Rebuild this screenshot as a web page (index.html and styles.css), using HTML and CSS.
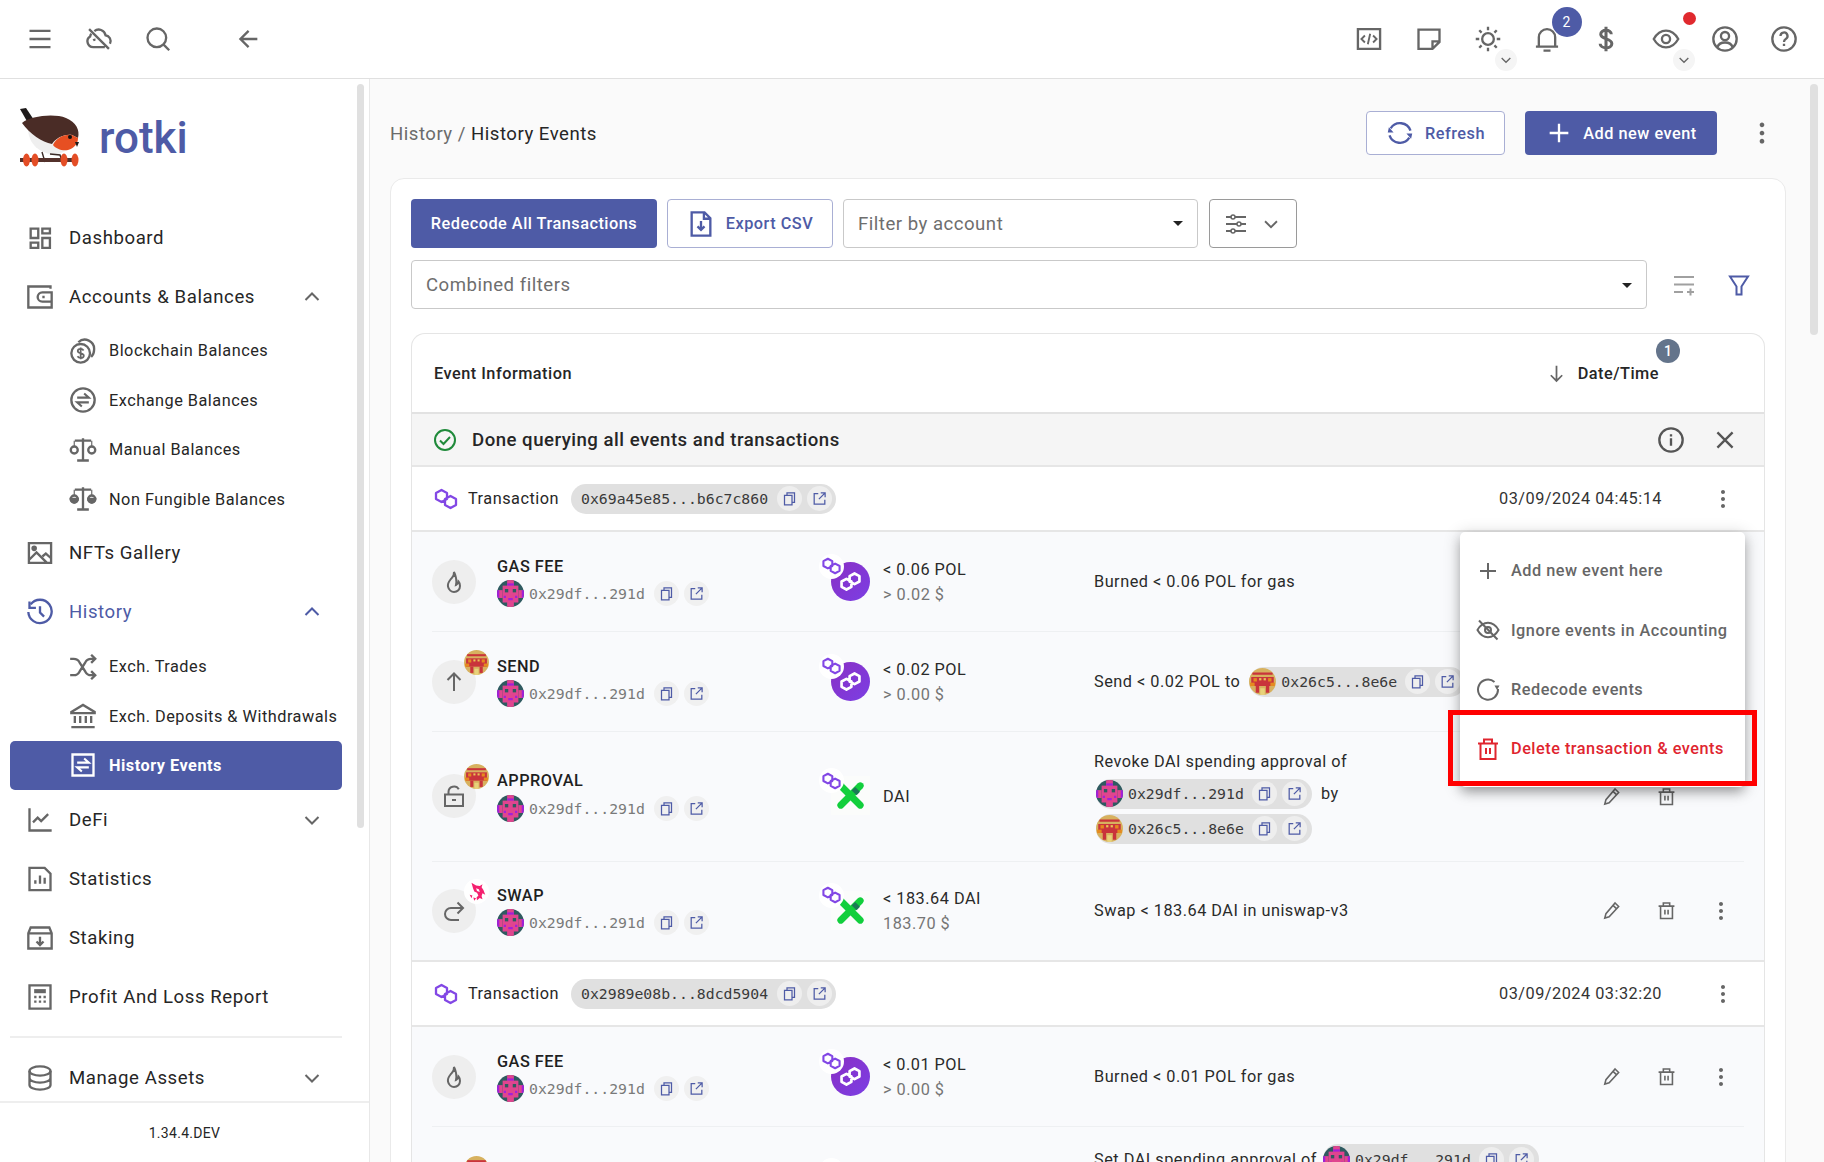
FILE: index.html
```html
<!DOCTYPE html>
<html lang="en">
<head>
<meta charset="utf-8">
<title>rotki</title>
<link rel="stylesheet" href="styles.css">
</head>
<body>
<svg class="sprite" aria-hidden="true">
<defs>
<linearGradient id="polyg" x1="0" y1="0" x2="1" y2="1"><stop offset="0" stop-color="#8a2fc4"/><stop offset="1" stop-color="#7b3fe4"/></linearGradient>
<clipPath id="circ"><circle cx="12" cy="12" r="12"/></clipPath>
<symbol id="menu" viewBox="0 0 24 24"><path d="M3 5h18M3 12h18M3 19h18"/></symbol>
<symbol id="cloudoff" viewBox="0 0 24 24"><path d="M3.5 3.5l17 17M8 5.2a6 6 0 0 1 9.6 3.6 5 5 0 0 1 3.8 7.2M17 19H7a5 5 0 0 1-2.6-9.2 6 6 0 0 1 1-2.3"/><path d="M9 12.5a4 4 0 0 0-2 .5"/></symbol>
<symbol id="search" viewBox="0 0 24 24"><circle cx="11" cy="11" r="8"/><path d="M16.8 16.8l4.8 4.8"/></symbol>
<symbol id="back" viewBox="0 0 24 24"><path d="M20 12H6M12.5 5l-7 7 7 7"/></symbol>
<symbol id="codebox" viewBox="0 0 24 24"><path d="M2.500 3.500h19v17h-19z"/><path d="M8.500 9l-3 3 3 3M15.500 9l3 3-3 3M13 7.500l-2 9" stroke-width="1.600"/></symbol>
<symbol id="note" viewBox="0 0 24 24"><path d="M21 4v10.500L15 20.500H3V4zM21 14h-6v6.500"/></symbol>
<symbol id="sun" viewBox="0 0 24 24"><circle cx="12" cy="12" r="5"/><path d="M12 1.500v3M12 19.500v3M1.500 12h3M19.500 12h3M4.500 4.500l2 2M17.500 17.500l2 2M4.500 19.500l2-2M17.500 6.500l2-2"/></symbol>
<symbol id="bell" viewBox="0 0 24 24"><path d="M2.500 18.500h19M5 18.500v-8a7 7 0 0 1 14 0v8M9 22h6"/></symbol>
<symbol id="dollar" viewBox="0 0 24 24"><path d="M16.500 8c0-2-1.900-3.500-4.500-3.500S7.500 5.900 7.500 8c0 4.800 9.500 2.900 9.500 8 0 2.200-2.200 3.500-5 3.500s-5-1.500-5-3.500M12 1.500v21" stroke-width="2.600"/></symbol>
<symbol id="eye" viewBox="0 0 24 24"><path d="M1.500 12C4 7.500 7.500 4.800 12 4.800s8 2.700 10.500 7.200c-2.500 4.500-6 7.200-10.500 7.200S4 16.500 1.500 12z"/><circle cx="12" cy="12" r="3.500"/></symbol>
<symbol id="eyeoff" viewBox="0 0 24 24"><path d="M1.500 12C4 7.500 7.500 4.800 12 4.800s8 2.700 10.500 7.200c-2.500 4.500-6 7.200-10.500 7.200S4 16.500 1.500 12z"/><circle cx="12" cy="12" r="3"/><path d="M3 2.500l18.500 19"/></symbol>
<symbol id="user" viewBox="0 0 24 24"><circle cx="12" cy="12" r="10"/><circle cx="12" cy="9.500" r="3.500"/><path d="M5.500 19c1-3 3.500-4 6.500-4s5.500 1 6.500 4"/></symbol>
<symbol id="help" viewBox="0 0 24 24"><circle cx="12" cy="12" r="10"/><path d="M9 9.500A3 3 0 1 1 13.500 12c-1 .6-1.500 1-1.500 2.500M12 16v2"/></symbol>
<symbol id="dash" viewBox="0 0 24 24"><path d="M4 4h6.500v8H4zM14 4h6.500v4H14zM4 16h6.500v4.500H4zM14 12h6.500v8.500H14z"/></symbol>
<symbol id="wallet" viewBox="0 0 24 24"><path d="M21 5V3H2v18h20V8H14a4 4 0 0 0 0 8h8M14 12h2"/></symbol>
<symbol id="coins" viewBox="0 0 24 24"><circle cx="10" cy="14" r="8"/><path d="M8 4.500A8 8 0 0 1 21.500 11a8 8 0 0 1-2.500 6"/><path d="M12.500 11.500c-.5-.8-1.400-1.300-2.500-1.300-1.500 0-2.500.8-2.500 1.900 0 2.600 5.200 1.300 5.200 3.900 0 1.100-1.200 1.900-2.700 1.900-1.200 0-2.200-.5-2.700-1.400M10 9v10" stroke-width="1.500"/></symbol>
<symbol id="excirc" viewBox="0 0 24 24"><circle cx="12" cy="12" r="10"/><path d="M7 10h10l-4-3.500M17 14H7l4 3.500" stroke-width="1.800"/></symbol>
<symbol id="scale" viewBox="0 0 24 24"><path d="M12 2v19M5 4h14M7 21h10"/><circle cx="4.500" cy="12" r="3"/><circle cx="19.500" cy="12" r="3"/><path d="M4.500 4v5M19.500 4v5" stroke-width="1"/></symbol>
<symbol id="scalef" viewBox="0 0 24 24"><path d="M12 2v19M5 4h14M7 21h10"/><circle cx="4.500" cy="12" r="3"/><circle cx="19.500" cy="12" r="3"/><path d="M4.500 4v5M19.500 4v5" stroke-width="1"/><path d="M1.500 12h6a3 3 0 0 1-6 0zM16.500 12h6a3 3 0 0 1-6 0z" fill="currentColor"/></symbol>
<symbol id="image" viewBox="0 0 24 24"><path d="M2.500 3.500h19v17h-19zM2.500 18L9 11.500l9 9"/><path d="M14 15l3-2.500 4.500 4"/><circle cx="7" cy="8" r="1.400" fill="currentColor"/></symbol>
<symbol id="history" viewBox="0 0 24 24"><path d="M4 5.500A10 10 0 1 1 2 12"/><path d="M3 3v5.500h5.500" stroke-width="2"/><path d="M12 7v5.500l3.500 3.500"/></symbol>
<symbol id="shuffle" viewBox="0 0 24 24"><path d="M1 5h3c2 0 4 1 5 3l5 8c1 2 3 3 5 3h3M1 19h3c2 0 4-1 5-3l5-8c1-2 3-3 5-3h3"/><path d="M19 1.500l3.500 3.500L19 8.500M19 15.500l3.500 3.500-3.500 3.500"/></symbol>
<symbol id="bank" viewBox="0 0 24 24"><path d="M2 8.500L12 2.500l10 6v1H2zM5 12v6M9.600 12v6M14.400 12v6M19 12v6M2 21.500h20"/></symbol>
<symbol id="exbox" viewBox="0 0 24 24"><path d="M3 3h18v18H3z"/><path d="M7 10h10l-4-3.500M17 14H7l4 3.500" stroke-width="1.800"/></symbol>
<symbol id="chart" viewBox="0 0 24 24"><path d="M3 2v19h19M6 14l4-4 3 3 6-6"/></symbol>
<symbol id="filechart" viewBox="0 0 24 24"><path d="M3 2.500h13l5 5v14H3zM8 16v-3M12 16V9M16 16v-5"/></symbol>
<symbol id="archive" viewBox="0 0 24 24"><path d="M4 3h16l2 5v13H2V8zM2 8h20M12 11v6.500M9 15l3 3 3-3"/></symbol>
<symbol id="calc" viewBox="0 0 24 24"><path d="M3 2h18v20H3z"/><path d="M7 7h10" stroke-width="3.500"/><path d="M7 12h2M11 12h2M15 12h2M7 16h2M11 16h2M15 16h2" stroke-width="2"/></symbol>
<symbol id="db" viewBox="0 0 24 24"><ellipse cx="12" cy="6" rx="9" ry="4"/><path d="M3 6v12c0 2.200 4 4 9 4s9-1.800 9-4V6M3 12c0 2.200 4 4 9 4s9-1.800 9-4"/></symbol>
<symbol id="chev-d" viewBox="0 0 24 24"><path d="M5.500 9l6.500 6.500L18.500 9"/></symbol>
<symbol id="chev-u" viewBox="0 0 24 24"><path d="M5.500 15L12 8.500 18.500 15"/></symbol>
<symbol id="refresh" viewBox="0 0 24 24"><path d="M4 8A9.500 9.500 0 0 1 21 10M20 16A9.500 9.500 0 0 1 3 14"/><path d="M1.500 11.500h5L2.500 7zM22.500 12.500h-5l4 4.500z" fill="currentColor" stroke="none"/></symbol>
<symbol id="plus" viewBox="0 0 24 24"><path d="M12 4v16M4 12h16"/></symbol>
<symbol id="more" viewBox="0 0 24 24"><path d="M12 3c-1.100 0-2 .9-2 2s.9 2 2 2 2-.9 2-2-.9-2-2-2zm0 14c-1.100 0-2 .9-2 2s.9 2 2 2 2-.9 2-2-.9-2-2-2zm0-7c-1.100 0-2 .9-2 2s.9 2 2 2 2-.9 2-2-.9-2-2-2z" fill="currentColor" stroke="none"/></symbol>
<symbol id="filedown" viewBox="0 0 24 24"><path d="M4 2h11l5 5v15H4zM14.500 2v5.500H20M12 9.500v7M9 14l3 3 3-3"/></symbol>
<symbol id="sliders" viewBox="0 0 24 24"><path d="M2 5h5.500M11 5h11M2 12h11M16.500 12H22M2 19h5.500M11 19h11" stroke-width="1.800"/><circle cx="9" cy="5" r="2" stroke-width="1.500"/><circle cx="15" cy="12" r="2" stroke-width="1.500"/><circle cx="9" cy="19" r="2" stroke-width="1.500"/></symbol>
<symbol id="listplus" viewBox="0 0 24 24"><path d="M2 4h20M2 11.500h20M2 19h9M15 19h7M18.500 15.500v7"/></symbol>
<symbol id="filter" viewBox="0 0 24 24"><path d="M3 3.500h18l-6.500 10v8h-5v-8z"/></symbol>
<symbol id="arrdown" viewBox="0 0 24 24"><path d="M12 3v17M5.500 14l6.500 6.500 6.500-6.500"/></symbol>
<symbol id="arrup" viewBox="0 0 24 24"><path d="M12 21V4M5.500 10L12 3.500 18.500 10"/></symbol>
<symbol id="check" viewBox="0 0 24 24"><circle cx="12" cy="12" r="10"/><path d="M7 12.500l3.500 3.500 6.500-7"/></symbol>
<symbol id="info" viewBox="0 0 24 24"><circle cx="12" cy="12" r="10"/><path d="M12 10.500V17M12 7v2"/></symbol>
<symbol id="close" viewBox="0 0 24 24"><path d="M5.500 5.500l13 13M18.500 5.500l-13 13"/></symbol>
<symbol id="copy" viewBox="0 0 24 24"><path d="M8 7V3h12v15h-4"/><path d="M4 7h12v15H4z"/></symbol>
<symbol id="ext" viewBox="0 0 24 24"><path d="M10 4H3.500v17h17v-7M14 3h7v7M21 3L11 13"/></symbol>
<symbol id="flame" viewBox="0 0 24 24"><path d="M12 2c.5 4-1.500 5-3.500 7.500C6.500 12 5.500 14 6 16.500 6.700 20 9.500 22 12 22c3.500 0 6-2.700 6-6 0-1.800-.6-3.500-1.500-4.500-.2 1.800-1 3-2.500 3.500 1-4-.2-10-2-13z"/></symbol>
<symbol id="unlock" viewBox="0 0 24 24"><path d="M3 10.500h18V22H3zM6.500 10.500V8a5.500 5.500 0 0 1 10.300-2.700M10 16h4"/></symbol>
<symbol id="redo" viewBox="0 0 24 24"><path d="M21 9H9a6 6 0 0 0 0 12h8M15.500 3.500L21 9l-5.500 5.500"/></symbol>
<symbol id="pencil" viewBox="0 0 24 24"><path d="M16.500 2.500l4.500 4.500L9 20l-5.500 1.500L5 16zM14 5.500l4.500 4.500"/></symbol>
<symbol id="trash" viewBox="0 0 24 24"><path d="M2 6.500h20M4.500 6.500V22h15V6.500M8 6.500V2.500h8v4M10 11v6M14 11v6"/></symbol>
<symbol id="redecode" viewBox="0 0 24 24"><path d="M18.500 5A10 10 0 1 0 22 12"/><path d="M18.500 8.500h5l-2.500 4.500z" fill="currentColor" stroke="none"/></symbol>
<symbol id="poly" viewBox="0 0 26 24"><path d="M8.500 3L14 6v6l-5.500 3L3 12V6zM17.500 9L23 12v6l-5.500 3L12 18v-6z" stroke-linejoin="round"/></symbol>
<symbol id="ava1" viewBox="0 0 24 24"><g clip-path="url(#circ)"><rect width="24" height="24" fill="#2f5a60"/><rect x="5" y="5" width="14" height="15" fill="#e0458f"/><rect x="9" y="0" width="6" height="24" fill="#e0458f"/><rect x="1" y="9" width="4" height="7" fill="#e0458f"/><rect x="19" y="9" width="4" height="7" fill="#e0458f"/><rect x="9" y="3" width="6" height="2" fill="#a41fd8"/><rect x="0" y="9" width="2" height="7" fill="#a41fd8"/><rect x="22" y="9" width="2" height="7" fill="#a41fd8"/><rect x="7" y="8" width="3" height="3" fill="#2f5a60"/><rect x="14" y="8" width="3" height="3" fill="#2f5a60"/><rect x="6" y="14" width="2" height="2" fill="#a41fd8"/><rect x="16" y="14" width="2" height="2" fill="#a41fd8"/><rect x="10" y="16" width="4" height="2" fill="#a41fd8"/></g></symbol>
<symbol id="ava2" viewBox="0 0 24 24"><g clip-path="url(#circ)"><rect width="24" height="24" fill="#d7b15f"/><rect x="3" y="4" width="18" height="2" fill="#c9343b"/><rect x="2" y="8" width="20" height="8" fill="#c9343b"/><rect x="4" y="9" width="3" height="3" fill="#e58a1f"/><rect x="17" y="9" width="3" height="3" fill="#e58a1f"/><rect x="9" y="9" width="2" height="2" fill="#e8c455"/><rect x="13" y="9" width="2" height="2" fill="#e8c455"/><rect x="1" y="13" width="4" height="3" fill="#e58a1f"/><rect x="19" y="13" width="4" height="3" fill="#e58a1f"/><rect x="6" y="16" width="3" height="6" fill="#c9343b"/><rect x="15" y="16" width="3" height="6" fill="#c9343b"/><rect x="10" y="18" width="4" height="6" fill="#e8d27a"/></g></symbol>
<symbol id="uni" viewBox="0 0 24 24"><path d="M6 3l5 3 4 .5 3-2-1 3.500 2 3 2 5-3-1.500-1 3 1 3.500-3-1.500-3 2.500-.5-3 2-2-1.500-3-3-1.500-1.500-4zM4 16l3 1-1 3zM8 19l3 1-2 2.500z" fill="#f5206f" stroke="none"/><path d="M11 9l3 1 1 3-3-1z" fill="#fff" stroke="none"/></symbol>
</defs>
</svg>

<div class="app">
  <header class="topbar">
    <button class="tb-btn"><svg class="i"><use href="#menu"/></svg></button>
    <button class="tb-btn"><svg class="i"><use href="#cloudoff"/></svg></button>
    <button class="tb-btn"><svg class="i"><use href="#search"/></svg></button>
    <button class="tb-btn tb-back"><svg class="i"><use href="#back"/></svg></button>
    <span class="tb-space"></span>
    <button class="tb-btn"><svg class="i"><use href="#codebox"/></svg></button>
    <button class="tb-btn"><svg class="i"><use href="#note"/></svg></button>
    <button class="tb-btn"><svg class="i"><use href="#sun"/></svg><span class="tb-chev"><svg class="i i14"><use href="#chev-d"/></svg></span></button>
    <button class="tb-btn"><svg class="i"><use href="#bell"/></svg><span class="tb-badge">2</span></button>
    <button class="tb-btn"><svg class="i"><use href="#dollar"/></svg></button>
    <button class="tb-btn"><svg class="i"><use href="#eye"/></svg><span class="tb-dot"></span><span class="tb-chev tb-chev-eye"><svg class="i i14"><use href="#chev-d"/></svg></span></button>
    <button class="tb-btn"><svg class="i"><use href="#user"/></svg></button>
    <button class="tb-btn"><svg class="i"><use href="#help"/></svg></button>
  </header>

  <div class="shell">
    <aside class="sidebar">
      <div class="side-thumb"></div>
      <div class="side-scroll">
        <div class="logo">
          <svg class="bird" viewBox="0 0 60 60">
            <path d="M0 1l6-1 8 12-6 3z" fill="#1f1b1b"/>
            <path d="M8 20c0 16 12 26 28 27l12-5-8-17z" fill="#efefef"/>
            <path d="M2 15C10 8 34 5 46 10c10 4 14 12 12 20l-6-3c-8-1-16 3-20 9C22 34 10 26 2 15z" fill="#4a2c26"/>
            <path d="M33 37c3-7 11-11 19-10l6 3c0 6-4 10-10 12-6 1-12-1-15-5z" fill="#e74f22"/>
            <circle cx="50" cy="29" r="2" fill="#111"/>
            <path d="M55 34l4 0-2 5z" fill="#1c1c1c"/>
            <path d="M22 44l3 10M30 46l10 1 2 6" stroke="#3a2a26" stroke-width="1.400" fill="none"/>
            <rect x="0" y="50" width="58" height="4" fill="#53312b"/>
            <ellipse cx="6.500" cy="52" rx="3.500" ry="6.500" fill="#e44e26"/>
            <ellipse cx="15" cy="52" rx="3.500" ry="6.500" fill="#e44e26"/>
            <ellipse cx="44" cy="52" rx="3.500" ry="6.500" fill="#e44e26"/>
            <ellipse cx="55" cy="52" rx="3.500" ry="6.500" fill="#e44e26"/>
          </svg>
          <span class="logo-text">rotki</span>
        </div>
        <nav class="nav">
          <a class="nav-item"><svg class="i"><use href="#dash"/></svg><span>Dashboard</span></a>
          <a class="nav-item"><svg class="i"><use href="#wallet"/></svg><span>Accounts &amp; Balances</span><svg class="i i24 nav-chev"><use href="#chev-u"/></svg></a>
          <a class="nav-sub"><svg class="i"><use href="#coins"/></svg><span>Blockchain Balances</span></a>
          <a class="nav-sub"><svg class="i"><use href="#excirc"/></svg><span>Exchange Balances</span></a>
          <a class="nav-sub"><svg class="i"><use href="#scale"/></svg><span>Manual Balances</span></a>
          <a class="nav-sub"><svg class="i"><use href="#scalef"/></svg><span>Non Fungible Balances</span></a>
          <a class="nav-item"><svg class="i"><use href="#image"/></svg><span>NFTs Gallery</span></a>
          <a class="nav-item nav-open"><svg class="i"><use href="#history"/></svg><span>History</span><svg class="i i24 nav-chev"><use href="#chev-u"/></svg></a>
          <a class="nav-sub"><svg class="i"><use href="#shuffle"/></svg><span>Exch. Trades</span></a>
          <a class="nav-sub"><svg class="i"><use href="#bank"/></svg><span>Exch. Deposits &amp; Withdrawals</span></a>
          <a class="nav-sub nav-active"><svg class="i"><use href="#exbox"/></svg><span>History Events</span></a>
          <a class="nav-item"><svg class="i"><use href="#chart"/></svg><span>DeFi</span><svg class="i i24 nav-chev"><use href="#chev-d"/></svg></a>
          <a class="nav-item"><svg class="i"><use href="#filechart"/></svg><span>Statistics</span></a>
          <a class="nav-item"><svg class="i"><use href="#archive"/></svg><span>Staking</span></a>
          <a class="nav-item"><svg class="i"><use href="#calc"/></svg><span>Profit And Loss Report</span></a>
          <div class="nav-div"></div>
          <a class="nav-item"><svg class="i"><use href="#db"/></svg><span>Manage Assets</span><svg class="i i24 nav-chev"><use href="#chev-d"/></svg></a>
        </nav>
      </div>
      <footer class="version">1.34.4.DEV</footer>
    </aside>

    <main class="main">
      <div class="main-thumb"></div>
      <div class="crumbs">
        <div class="crumb-text"><span class="crumb-muted">History /</span> History Events</div>
        <button class="btn btn-out btn-refresh"><svg class="i"><use href="#refresh"/></svg>Refresh</button>
        <button class="btn btn-fill btn-add"><svg class="i"><use href="#plus"/></svg>Add new event</button>
        <span class="crumb-more"><svg class="i"><use href="#more"/></svg></span>
      </div>

      <section class="card">
        <div class="toolbar">
          <button class="btn btn-fill btn-redecode">Redecode All Transactions</button>
          <button class="btn btn-out btn-export"><svg class="i"><use href="#filedown"/></svg>Export CSV</button>
          <div class="field field-account"><span>Filter by account</span><i class="caret"></i></div>
          <button class="btn-settings"><svg class="i i24"><use href="#sliders"/></svg><svg class="i i22"><use href="#chev-d"/></svg></button>
        </div>
        <div class="toolbar2">
          <div class="field field-combined"><span>Combined filters</span><i class="caret"></i></div>
          <svg class="i i24 ic-list"><use href="#listplus"/></svg>
          <svg class="i i24 ic-filter"><use href="#filter"/></svg>
        </div>

        <div class="table">
          <div class="thead">
            <span class="th-info">Event Information</span>
            <span class="th-date"><svg class="i i20"><use href="#arrdown"/></svg>Date/Time<em class="th-badge">1</em></span>
          </div>
          <div class="status">
            <svg class="i i24 st-check"><use href="#check"/></svg>
            <span class="st-text">Done querying all events and transactions</span>
            <svg class="i st-info"><use href="#info"/></svg>
            <svg class="i st-x"><use href="#close"/></svg>
          </div>

          <div class="tx">
            <svg class="poly-ic"><use href="#poly"/></svg>
            <span class="tx-label">Transaction</span>
            <span class="chip chip-tx"><span class="hash">0x69a45e85...b6c7c860</span><span class="cb"><svg class="i i16"><use href="#copy"/></svg></span><span class="cb"><svg class="i i16"><use href="#ext"/></svg></span></span>
            <span class="tx-date">03/09/2024 04:45:14</span>
            <svg class="i i24 tx-more"><use href="#more"/></svg>
          </div>

          <div class="events">
            <div class="ev">
              <div class="ev-type"><span class="ev-ic"><svg class="i i24"><use href="#flame"/></svg></span><div><div class="ev-title">GAS FEE</div><div class="addr"><svg class="ava"><use href="#ava1"/></svg><span class="hash hash-muted">0x29df...291d</span><span class="cb"><svg class="i i16"><use href="#copy"/></svg></span><span class="cb"><svg class="i i16"><use href="#ext"/></svg></span></div></div></div>
              <div class="ev-asset"><span class="coin"><svg class="coin-lg" viewBox="0 0 40 40"><circle cx="20" cy="20" r="20" fill="url(#polyg)"/><use href="#poly" class="coin-link" width="24" height="22" transform="translate(32 9) scale(-1 1)"/></svg><span class="chain"><svg class="chain-ic"><use href="#poly"/></svg></span></span><div><div class="amt">&lt; 0.06 POL</div><div class="amt-usd">&gt; 0.02 $</div></div></div>
              <div class="ev-desc">Burned &lt; 0.06 POL for gas</div>
              <div class="ev-act"><span><svg class="i i18"><use href="#pencil"/></svg></span><span><svg class="i i18"><use href="#trash"/></svg></span><span><svg class="i i24"><use href="#more"/></svg></span></div>
            </div>
            <div class="ev">
              <div class="ev-type"><span class="ev-ic"><svg class="i i24"><use href="#arrup"/></svg><svg class="ev-badge"><use href="#ava2"/></svg></span><div><div class="ev-title">SEND</div><div class="addr"><svg class="ava"><use href="#ava1"/></svg><span class="hash hash-muted">0x29df...291d</span><span class="cb"><svg class="i i16"><use href="#copy"/></svg></span><span class="cb"><svg class="i i16"><use href="#ext"/></svg></span></div></div></div>
              <div class="ev-asset"><span class="coin"><svg class="coin-lg" viewBox="0 0 40 40"><circle cx="20" cy="20" r="20" fill="url(#polyg)"/><use href="#poly" class="coin-link" width="24" height="22" transform="translate(32 9) scale(-1 1)"/></svg><span class="chain"><svg class="chain-ic"><use href="#poly"/></svg></span></span><div><div class="amt">&lt; 0.02 POL</div><div class="amt-usd">&gt; 0.00 $</div></div></div>
              <div class="ev-desc ev-line">Send &lt; 0.02 POL to <span class="chip chip-addr"><svg class="ava"><use href="#ava2"/></svg><span class="hash">0x26c5...8e6e</span><span class="cb"><svg class="i i16"><use href="#copy"/></svg></span><span class="cb"><svg class="i i16"><use href="#ext"/></svg></span></span></div>
            </div>
            <div class="ev ev-tall">
              <div class="ev-type"><span class="ev-ic"><svg class="i i24"><use href="#unlock"/></svg><svg class="ev-badge"><use href="#ava2"/></svg></span><div><div class="ev-title">APPROVAL</div><div class="addr"><svg class="ava"><use href="#ava1"/></svg><span class="hash hash-muted">0x29df...291d</span><span class="cb"><svg class="i i16"><use href="#copy"/></svg></span><span class="cb"><svg class="i i16"><use href="#ext"/></svg></span></div></div></div>
              <div class="ev-asset"><span class="coin"><svg class="coin-lg" viewBox="0 0 40 40"><rect width="40" height="40" fill="#fbfcfb"/><path d="M10 30L30 10" stroke="#12cf3c" stroke-width="7" stroke-linecap="round"/><path d="M10 10l20 20" stroke="#12cf3c" stroke-width="7" stroke-linecap="round"/><path d="M23 13l5 5" stroke="#1b7a55" stroke-width="5"/></svg><span class="chain"><svg class="chain-ic"><use href="#poly"/></svg></span></span><div><div class="amt">DAI</div></div></div>
              <div class="ev-desc ev-stack"><div class="ev-first">Revoke DAI spending approval of</div><div class="ev-line"><span class="chip chip-addr"><svg class="ava"><use href="#ava1"/></svg><span class="hash">0x29df...291d</span><span class="cb"><svg class="i i16"><use href="#copy"/></svg></span><span class="cb"><svg class="i i16"><use href="#ext"/></svg></span></span> by</div><div class="ev-line"><span class="chip chip-addr"><svg class="ava"><use href="#ava2"/></svg><span class="hash">0x26c5...8e6e</span><span class="cb"><svg class="i i16"><use href="#copy"/></svg></span><span class="cb"><svg class="i i16"><use href="#ext"/></svg></span></span></div></div>
              <div class="ev-act"><span><svg class="i i18"><use href="#pencil"/></svg></span><span><svg class="i i18"><use href="#trash"/></svg></span><span></span></div>
            </div>
            <div class="ev ev-last">
              <div class="ev-type"><span class="ev-ic"><svg class="i i24"><use href="#redo"/></svg><span class="ev-badge ev-badge-uni"><svg class="uni-ic"><use href="#uni"/></svg></span></span><div><div class="ev-title">SWAP</div><div class="addr"><svg class="ava"><use href="#ava1"/></svg><span class="hash hash-muted">0x29df...291d</span><span class="cb"><svg class="i i16"><use href="#copy"/></svg></span><span class="cb"><svg class="i i16"><use href="#ext"/></svg></span></div></div></div>
              <div class="ev-asset"><span class="coin"><svg class="coin-lg" viewBox="0 0 40 40"><rect width="40" height="40" fill="#fbfcfb"/><path d="M10 30L30 10" stroke="#12cf3c" stroke-width="7" stroke-linecap="round"/><path d="M10 10l20 20" stroke="#12cf3c" stroke-width="7" stroke-linecap="round"/><path d="M23 13l5 5" stroke="#1b7a55" stroke-width="5"/></svg><span class="chain"><svg class="chain-ic"><use href="#poly"/></svg></span></span><div><div class="amt">&lt; 183.64 DAI</div><div class="amt-usd">183.70 $</div></div></div>
              <div class="ev-desc">Swap &lt; 183.64 DAI in uniswap-v3</div>
              <div class="ev-act"><span><svg class="i i18"><use href="#pencil"/></svg></span><span><svg class="i i18"><use href="#trash"/></svg></span><span><svg class="i i24"><use href="#more"/></svg></span></div>
            </div>
          </div>

          <div class="tx tx-next">
            <svg class="poly-ic"><use href="#poly"/></svg>
            <span class="tx-label">Transaction</span>
            <span class="chip chip-tx"><span class="hash">0x2989e08b...8dcd5904</span><span class="cb"><svg class="i i16"><use href="#copy"/></svg></span><span class="cb"><svg class="i i16"><use href="#ext"/></svg></span></span>
            <span class="tx-date">03/09/2024 03:32:20</span>
            <svg class="i i24 tx-more"><use href="#more"/></svg>
          </div>

          <div class="events">
            <div class="ev">
              <div class="ev-type"><span class="ev-ic"><svg class="i i24"><use href="#flame"/></svg></span><div><div class="ev-title">GAS FEE</div><div class="addr"><svg class="ava"><use href="#ava1"/></svg><span class="hash hash-muted">0x29df...291d</span><span class="cb"><svg class="i i16"><use href="#copy"/></svg></span><span class="cb"><svg class="i i16"><use href="#ext"/></svg></span></div></div></div>
              <div class="ev-asset"><span class="coin"><svg class="coin-lg" viewBox="0 0 40 40"><circle cx="20" cy="20" r="20" fill="url(#polyg)"/><use href="#poly" class="coin-link" width="24" height="22" transform="translate(32 9) scale(-1 1)"/></svg><span class="chain"><svg class="chain-ic"><use href="#poly"/></svg></span></span><div><div class="amt">&lt; 0.01 POL</div><div class="amt-usd">&gt; 0.00 $</div></div></div>
              <div class="ev-desc">Burned &lt; 0.01 POL for gas</div>
              <div class="ev-act"><span><svg class="i i18"><use href="#pencil"/></svg></span><span><svg class="i i18"><use href="#trash"/></svg></span><span><svg class="i i24"><use href="#more"/></svg></span></div>
            </div>
            <div class="ev ev-tall ev-cut">
              <div class="ev-type"><span class="ev-ic"><svg class="ev-badge"><use href="#ava2"/></svg></span><div></div></div>
              <div class="ev-asset"><span class="coin"><span class="chain"><svg class="chain-ic"><use href="#poly"/></svg></span></span></div>
              <div class="ev-desc ev-line">Set DAI spending approval of <span class="chip chip-addr"><svg class="ava"><use href="#ava1"/></svg><span class="hash">0x29df...291d</span><span class="cb"><svg class="i i16"><use href="#copy"/></svg></span><span class="cb"><svg class="i i16"><use href="#ext"/></svg></span></span></div>
            </div>
          </div>

          <div class="menu">
            <div class="menu-item"><svg class="i i24"><use href="#plus"/></svg>Add new event here</div>
            <div class="menu-item"><svg class="i i24"><use href="#eyeoff"/></svg>Ignore events in Accounting</div>
            <div class="menu-item"><svg class="i i24"><use href="#redecode"/></svg>Redecode events</div>
            <div class="menu-item menu-danger"><svg class="i i24"><use href="#trash"/></svg>Delete transaction &amp; events</div>
          </div>
          <div class="callout"></div>
        </div>
      </section>
    </main>
  </div>
</div>
</body>
</html>
```
FILE: styles.css
```css
* { box-sizing: border-box; }
html, body { margin: 0; height: 1162px; overflow: hidden; }
body { font-family: Roboto, "Liberation Sans", sans-serif; font-size: 16.3px; letter-spacing: .5px; color: #262626; background: #fff; }
.sprite { position: absolute; width: 0; height: 0; }
button { font: inherit; letter-spacing: inherit; background: none; border: 0; padding: 0; color: inherit; }

.i { width: 28px; height: 28px; fill: none; stroke: currentColor; stroke-width: 2; flex: none; color: #666; }
.i14 { width: 16px; height: 16px; }
.i16 { width: 17px; height: 17px; }
.i18 { width: 19px; height: 19px; }
.i20 { width: 21px; height: 21px; }
.i22 { width: 22px; height: 22px; }
.i24 { width: 24px; height: 24px; }

.app { height: 1162px; display: flex; flex-direction: column; }
.topbar { height: 79px; flex: none; display: flex; align-items: center; padding: 0 10px; border-bottom: 1px solid #e0e0e0; background: #fff; }
.tb-btn { width: 59.3px; height: 78px; display: flex; align-items: center; justify-content: center; position: relative; }
.tb-back { margin-left: 30px; }
.tb-space { flex: 1; }
.tb-chev { position: absolute; left: 37px; top: 49px; width: 22px; height: 22px; border-radius: 50%; background: #f5f5f5; display: flex; align-items: center; justify-content: center; }
.tb-chev-eye { left: 37px; }
.tb-badge { position: absolute; left: 34px; top: 7px; width: 30px; height: 30px; border-radius: 50%; background: #4e5ba6; color: #fff; font-size: 14px; letter-spacing: 0; display: flex; align-items: center; justify-content: center; }
.tb-dot { position: absolute; left: 47px; top: 12px; width: 13px; height: 13px; border-radius: 50%; background: #e0292e; }

.shell { flex: 1; display: flex; min-height: 0; }
.sidebar { width: 370px; flex: none; border-right: 1px solid #e8e8e8; display: flex; flex-direction: column; position: relative; background: #fff; }
.side-scroll { flex: 1; min-height: 0; overflow: hidden; }
.side-thumb { position: absolute; left: 357px; top: 5px; width: 7px; height: 744px; border-radius: 4px; background: #e0e0e0; }
.logo { height: 129px; padding: 29px 0 0 20px; display: flex; align-items: flex-start; gap: 19px; }
.bird { width: 60px; height: 60px; flex: none; }
.logo-text { font-size: 44px; font-weight: 500; color: #4e5ba6; line-height: 60px; letter-spacing: 0; }
.nav { margin-left: 10px; width: 332px; display: flex; flex-direction: column; }
.nav-item { height: 59.1px; flex: none; display: flex; align-items: center; padding-left: 16px; gap: 15px; font-size: 18.6px; letter-spacing: .58px; }
.nav-sub { height: 49.4px; flex: none; display: flex; align-items: center; padding-left: 59px; gap: 12px; font-size: 16.3px; border-radius: 5px; white-space: nowrap; }
.nav-chev { margin-left: auto; margin-right: 18px; }
.nav-open, .nav-open .i { color: #4e5ba6; }
.nav-active { background: #4e5ba6; color: #fff; font-weight: 700; }
.nav-active .i { color: #fff; }
.nav-div { height: 1.500px; background: #eee; margin: 10px 0; flex: none; }
.version { height: 61px; flex: none; border-top: 2px solid #eee; display: flex; align-items: center; justify-content: center; font-size: 14px; letter-spacing: .3px; background: #fff; }

.main { flex: 1; min-width: 0; background: #fafafa; padding: 32px 38px 0 20px; position: relative; overflow: hidden; }
.main-thumb { position: absolute; right: 6px; top: 5px; width: 8px; height: 251px; border-radius: 4px; background: #e0e0e0; }
.crumbs { display: flex; align-items: center; height: 44px; }
.crumb-text { flex: 1; font-size: 18.6px; padding-top: 1px; }
.crumb-muted { color: #6b6b6b; }
.btn { height: 44px; border-radius: 4px; display: flex; align-items: center; justify-content: center; font-size: 16.3px; font-weight: 500; white-space: nowrap; }
.btn-out { border: 1.500px solid #a9afd4; color: #4e5ba6; background: #fff; }
.btn-out .i { color: #4e5ba6; }
.btn-fill { background: #4e5ba6; color: #fff; }
.btn-fill .i { color: #fff; }
.btn-refresh { width: 139px; gap: 11px; margin-right: 20px; }
.btn-add { width: 192px; gap: 10px; }
.crumb-more { margin-left: 31px; width: 28px; margin-right: 10px; display: flex; }
.card { margin-top: 23px; background: #fff; border: 1px solid #eaeaea; border-radius: 14px 14px 0 0; padding: 20px 20px 0; width: 1396px; height: 1100px; }
.toolbar { display: flex; gap: 10px; height: 49px; }
.toolbar .btn { height: 49px; }
.btn-redecode { width: 246px; }
.btn-export { width: 166px; gap: 11px; }
.field { border: 1.500px solid #c9c9c9; border-radius: 4px; height: 49px; display: flex; align-items: center; justify-content: space-between; padding: 0 14px; font-size: 18.6px; color: #6e6e6e; background: #fff; }
.field-account { width: 355px; }
.field-combined { width: 1236px; padding-top: 1px; }
.caret { width: 0; height: 0; border-left: 5.500px solid transparent; border-right: 5.500px solid transparent; border-top: 5.500px solid #222; }
.btn-settings { width: 88px; height: 49px; border: 1.500px solid #9a9a9a; border-radius: 4px; display: flex; align-items: center; justify-content: center; gap: 12px; background: #fff; margin-left: 1px; }
.toolbar2 { display: flex; align-items: center; margin-top: 12px; height: 49px; }
.ic-list { margin-left: 25px; color: #a0a0a0; }
.ic-filter { margin-left: 31px; color: #4e5ba6; }

.table { margin-top: 24px; border: 1px solid #e5e5e5; border-bottom: 0; border-radius: 14px 14px 0 0; position: relative; width: 1354px; }
.thead { height: 80px; display: flex; align-items: center; justify-content: space-between; padding: 0 105px 0 22px; font-weight: 500; border-bottom: 2px solid #e2e2e2; }
.th-date { display: flex; align-items: center; gap: 11px; position: relative; }
.th-badge { position: absolute; right: -21px; top: -24px; width: 24px; height: 24px; border-radius: 50%; background: #64748b; color: #fff; font-style: normal; font-size: 14px; letter-spacing: 0; display: flex; align-items: center; justify-content: center; }
.status { height: 53px; background: #f5f5f5; border-bottom: 2px solid #e6e6e6; display: flex; align-items: center; padding-left: 21px; }
.st-check { color: #1f8a3a; }
.st-text { flex: 1; margin-left: 15px; font-size: 18.6px; font-weight: 500; }
.st-info { margin-right: 26px; color: #555; }
.st-x { margin-right: 25px; color: #555; }

.tx { height: 65px; background: #fff; border-bottom: 2px solid #e6e6e6; display: flex; align-items: center; padding-left: 21px; }
.tx-next { height: 67px; border-top: 2px solid #e6e6e6; }
.poly-ic { width: 26px; height: 24px; fill: none; stroke: #8247e5; stroke-width: 2.300; flex: none; }
.tx-label { margin-left: 9px; width: 103px; }
.chip { display: inline-flex; align-items: center; height: 30px; border-radius: 15px; background: #e0e0e0; flex: none; letter-spacing: 0; }
.chip .cb { background: #eeeeee; }
.chip-tx { padding: 0 4px 0 10px; width: 265px; }
.chip-addr { padding-right: 4px; width: 216px; }
.chip-addr .hash { margin-left: 5px; width: 115px; }
.hash { font-family: "DejaVu Sans Mono", "Liberation Mono", monospace; font-size: 14.800px; letter-spacing: 0; color: #3a3a3a; white-space: nowrap; }
.hash-muted { color: #7a7a7a; margin-left: 5px; }
.cb { width: 25px; height: 25px; border-radius: 50%; background: #f0f0f0; display: inline-flex; align-items: center; justify-content: center; flex: none; margin-left: 5px; }
.cb .i { color: #4e5ba6; width: 15px; height: 15px; }
.hash + .cb { margin-left: 9px; }
.tx-date { margin-left: auto; margin-right: 49px; color: #333; }
.tx-more { margin-right: 29px; }

.events { background: #f9fafc; padding: 0 20px; }
.ev { height: 100px; border-bottom: 1.500px solid #eef0f2; display: flex; align-items: center; position: relative; }
.ev-tall { height: 129.500px; }
.ev-last { border-bottom: 0; height: 98.500px; }
.ev-cut { align-items: flex-start; padding-top: 17px; }
.ev-cut .ev-type, .ev-cut .ev-asset { margin-top: 22px; }
.ev-type { width: 390px; display: flex; align-items: center; gap: 21px; flex: none; }
.ev-ic { width: 44px; height: 44px; border-radius: 50%; background: #eeeeee; display: flex; align-items: center; justify-content: center; position: relative; flex: none; }
.ev-badge { position: absolute; left: 32px; top: -10px; width: 25px; height: 25px; }
.ev-badge-uni { background: #fff; border-radius: 50%; display: flex; align-items: center; justify-content: center; }
.uni-ic { width: 22px; height: 22px; }
.ev-title { font-weight: 500; font-size: 16.300px; color: #1f1f1f; line-height: 24px; }
.addr { display: flex; align-items: center; height: 30px; }
.ava { width: 27px; height: 27px; flex: none; }
.hash-muted + .cb { margin-left: 9px; }
.ev-asset { width: 272px; flex: none; display: flex; align-items: center; gap: 13px; }
.coin { width: 48px; height: 40px; position: relative; flex: none; }
.coin-lg { position: absolute; left: 9px; top: 0; width: 39px; height: 39px; }
.coin-link { fill: none; stroke: #fff; stroke-width: 3; }
.chain { position: absolute; left: -3px; top: -8px; width: 25px; height: 25px; border-radius: 50%; background: #fff; display: flex; align-items: center; justify-content: center; }
.chain-ic { width: 21px; height: 20px; fill: none; stroke: #8247e5; stroke-width: 2.600; }
.amt { line-height: 25px; color: #2a2a2a; }
.amt-usd { line-height: 25px; color: #757575; }
.ev-desc { flex: 1; white-space: nowrap; color: #2a2a2a; }
.ev-line { display: flex; align-items: center; gap: 9px; }
.ev-cut .ev-line { gap: 6px; }
.ev-stack { display: flex; flex-direction: column; gap: 5px; }
.ev-first { height: 25px; line-height: 26px; }
.ev-stack .chip-addr { margin-left: 2px; }
.ev-act { display: flex; gap: 5px; flex: none; margin-right: -2px; }
.ev-act span { width: 50px; height: 24px; display: flex; align-items: center; justify-content: center; }

.menu { position: absolute; left: 1048px; top: 198px; width: 285px; height: 255px; background: #fff; border-radius: 5px; box-shadow: 0 6px 12px -2px rgba(0,0,0,.3), 0 3px 16px 2px rgba(0,0,0,.16); padding: 9px 0 7px; display: flex; flex-direction: column; }
.menu-item { height: 59.400px; display: flex; align-items: center; gap: 11px; padding-left: 16px; color: #666; font-weight: 500; white-space: nowrap; }
.menu-danger, .menu-danger .i { color: #e0252f; }
.callout { position: absolute; left: 1036px; top: 376px; width: 309px; height: 76px; border: 5px solid #f00; }
```
